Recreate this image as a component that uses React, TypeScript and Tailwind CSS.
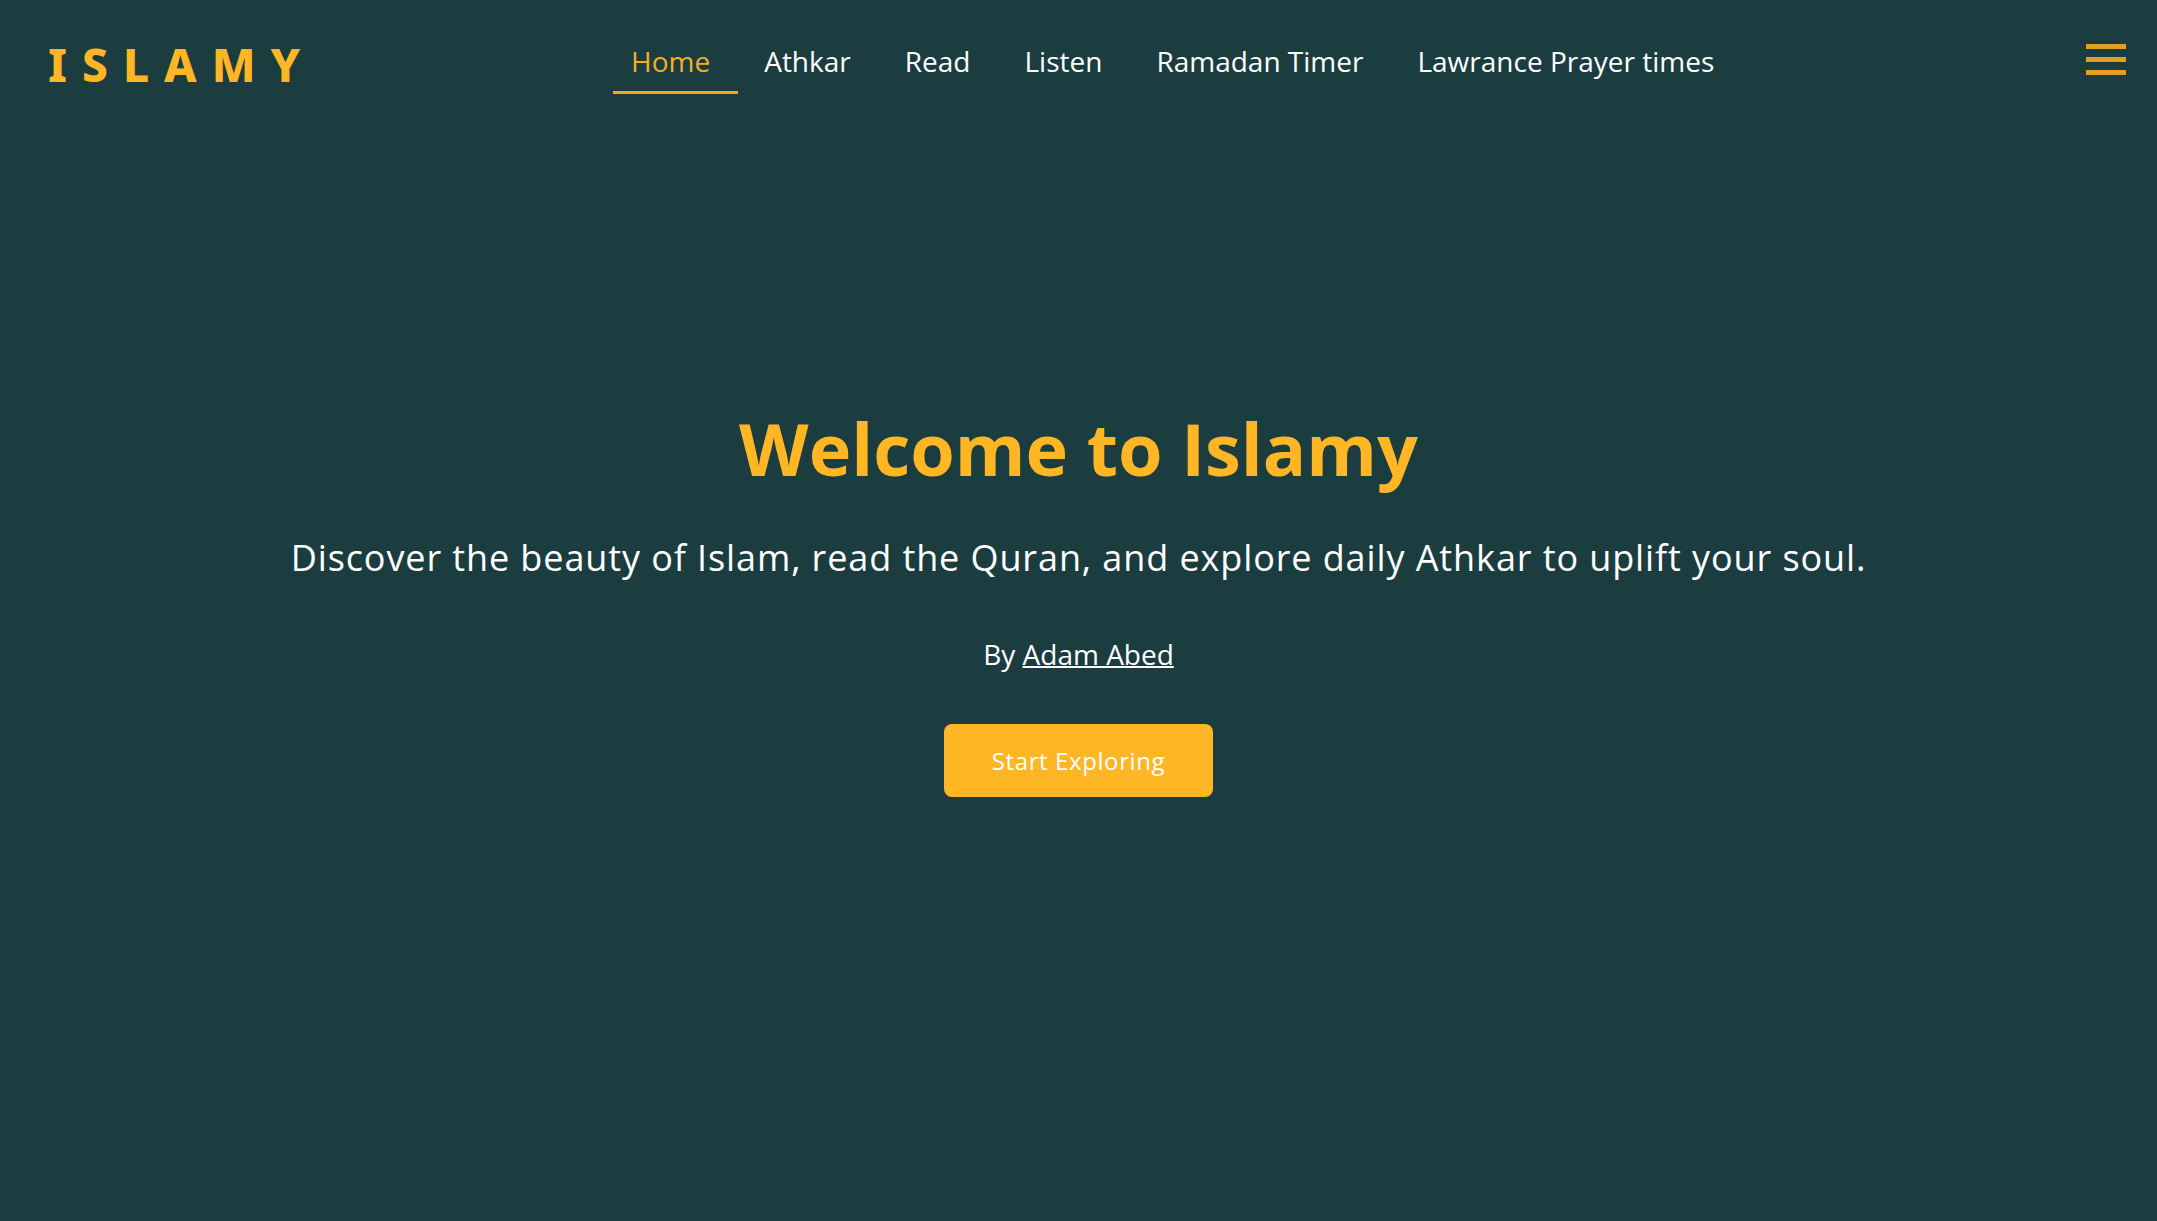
const links = ["Home", "Athkar", "Read", "Listen", "Ramadan Timer", "Lawrance Prayer times"];

function Header() {
  return (
    <header className="flex items-start pt-9 pr-[31px] pl-12">
      <a
        href="#home"
        className="w-[27%] shrink-0 font-['Noto_Sans'] text-[46px] leading-14 font-extrabold tracking-[15px] text-[#ffb624]"
      >
        ISLAMY
      </a>
      <nav className="flex flex-1 gap-2 pl-1" aria-label="Main">
        {links.map((label, i) => (
          <a
            key={label}
            href={"#" + label.toLowerCase().replaceAll(" ", "-")}
            aria-current={i === 0 ? "page" : undefined}
            className={
              i === 0
                ? "border-b-3 border-[#f0a420] pt-px pr-7 pb-1.5 pl-[18px] text-[28px] leading-12 whitespace-nowrap text-[#f2ae2a]"
                : "border-b-3 border-transparent pt-px pr-7 pb-1.5 pl-[18px] text-[28px] leading-12 whitespace-nowrap text-white"
            }
          >
            {label}
          </a>
        ))}
      </nav>
      <button type="button" aria-label="Open menu" className="mt-2 flex w-10 flex-col gap-2">
        <span className="h-[5px] w-full bg-[#dfa024]" />
        <span className="h-[5px] w-full bg-[#dfa024]" />
        <span className="h-[5px] w-full bg-[#dfa024]" />
      </button>
    </header>
  );
}

export default function App() {
  return (
    <div className="flex min-h-screen flex-col bg-[#1b3d3f] font-['Open_Sans',sans-serif] text-white">
      <Header />
      <main className="flex flex-1 flex-col items-center px-8 pt-[296px] text-center">
        <h1 className="text-[72px] leading-[116px] font-bold text-[#ffb624]">Welcome to Islamy</h1>
        <p className="mt-7 text-[36px] leading-12 tracking-wide">
          Discover the beauty of Islam, read the Quran, and explore daily Athkar to uplift your soul.
        </p>
        <p className="mt-12 text-[28px] leading-12">
          By{" "}
          <a href="#author" className="underline decoration-2">
            Adam Abed
          </a>
        </p>
        <button type="button" className="mt-[46px] rounded-lg bg-[#ffb624] px-12 py-5 text-[24px] leading-[33px] tracking-wide">
          Start Exploring
        </button>
      </main>
    </div>
  );
}
